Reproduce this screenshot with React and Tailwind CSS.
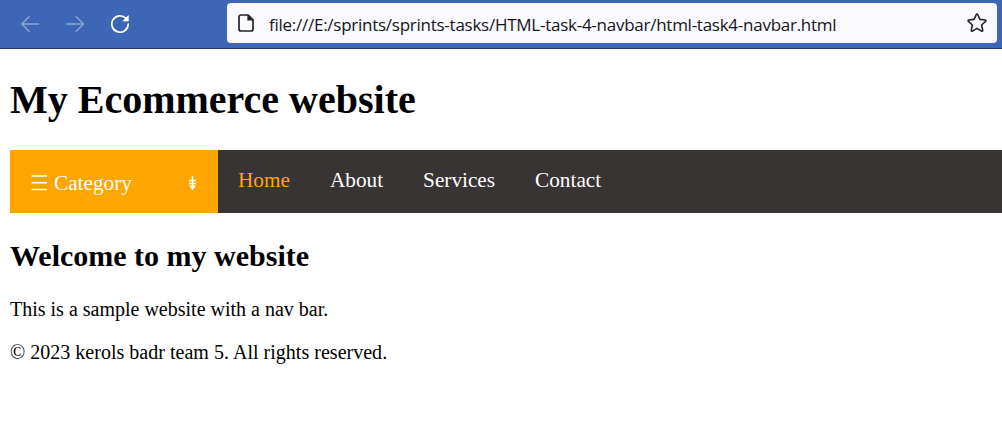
const links = ["Home", "About", "Services", "Contact"];

function BackIcon() {
  return (
    <svg className="h-5 w-5" viewBox="0 0 20 20" fill="none" stroke="#8ba3d6" strokeWidth="1.5" strokeLinecap="round" strokeLinejoin="round">
      <path d="M18.5 10H1.8M9 2.800 1.8 10 9 17.200" />
    </svg>
  );
}

function ForwardIcon() {
  return (
    <svg className="h-5 w-5" viewBox="0 0 20 20" fill="none" stroke="#8ba3d6" strokeWidth="1.5" strokeLinecap="round" strokeLinejoin="round">
      <path d="M1.8 10h16.700M11.300 2.800l7.200 7.200-7.200 7.200" />
    </svg>
  );
}

function ReloadIcon() {
  return (
    <svg className="h-5 w-5" viewBox="0 0 20 20" fill="none">
      <path d="M15.800 4.200A8.200 8.200 0 1 0 18.2 10" stroke="#fff" strokeWidth="1.700" strokeLinecap="round" />
      <path d="M18.400 1.600v5.500h-5.500z" fill="#fff" stroke="#fff" strokeWidth=".6" strokeLinejoin="round" />
    </svg>
  );
}

function PageIcon() {
  return (
    <svg className="h-[18px] w-4" viewBox="0 0 16 18" fill="none">
      <path d="M3 1h7.2L15 5.8V15a2 2 0 0 1-2 2H3a2 2 0 0 1-2-2V3a2 2 0 0 1 2-2z" stroke="#23222b" strokeWidth="1.7" strokeLinejoin="round" />
      <path d="M9.4.8v5.6H15z" fill="#23222b" />
    </svg>
  );
}

function StarIcon() {
  return (
    <svg className="h-5 w-5" viewBox="0 0 20 20" fill="none" stroke="#23222b" strokeWidth="1.6" strokeLinejoin="round">
      <path d="M9.3 1.5a.8.8 0 0 1 1.4 0l2.2 4.9 5.3.6a.8.8 0 0 1 .4 1.4l-4 3.6 1.1 5.3a.8.8 0 0 1-1.2.8L10 15.4l-4.5 2.7a.8.8 0 0 1-1.2-.8L5.400 12l-4-3.600a.8.8 0 0 1 .4-1.400l5.300-.6z" />
    </svg>
  );
}

export default function App() {
  return (
    <div className="h-[446px] w-[1002px] overflow-hidden bg-white font-['Liberation_Serif',serif] text-black">
      <header className="flex h-[49px] items-start border-b border-[#23376b] bg-[#3d66b6] pt-[3px] pl-5">
        <div className="flex h-10 items-center gap-[25px] pt-[1px]">
          <BackIcon />
          <ForwardIcon />
          <ReloadIcon />
        </div>
        <div className="ml-[97px] flex h-10 w-[770px] items-center rounded bg-[#f9f9fe] pl-[11px]">
          <PageIcon />
          <span className="ml-[15px] pt-[3px] font-['Open_Sans','Noto_Sans',sans-serif] text-[17px] leading-6 tracking-[-0.257px] whitespace-nowrap text-[#15141a]">
            file:///E:/sprints/sprints-tasks/HTML-task-4-navbar/html-task4-navbar.html
          </span>
          <span className="mr-[10px] ml-auto"><StarIcon /></span>
        </div>
      </header>
      <main className="pl-[10px]">
        <h1 className="pt-[28px] text-[40px] leading-[46px] font-bold whitespace-nowrap">My Ecommerce website</h1>
        <nav className="mt-[27px] flex h-[63px] bg-[#383433] text-[21.25px] leading-6 text-white">
          <div className="flex w-[208px] items-start bg-[#ffa500] px-5 pt-[21px]">
            <svg className="mt-[3px] h-[18px] w-[18px]" viewBox="0 0 18 18" stroke="#fff" strokeWidth="1.5">
              <path d="M1.500 2h15.500M1.500 8.800h15.500M1.500 15.500h15.500" />
            </svg>
            <span className="ml-[6px]">Category</span>
            <svg className="mt-[4px] ml-auto h-4 w-[10px]" viewBox="0 0 10 16" fill="none">
              <path d="M4.500 1v12M1 5.500h7M1 8.500h7" stroke="#fff" strokeWidth="1.500" />
              <path d="M.800 10.500h7.400l-3.700 4.700z" fill="#fff" />
            </svg>
          </div>
          <ul className="flex gap-10 pt-[18px] pl-5">
            {links.map((link) => (
              <li key={link} className={link === "Home" ? "text-[#ffa500]" : "text-white"}>{link}</li>
            ))}
          </ul>
        </nav>
        <h2 className="mt-[26px] text-[30px] leading-[34px] font-bold whitespace-nowrap">Welcome to my website</h2>
        <p className="mt-[25px] text-[20px] leading-[23px] whitespace-nowrap">This is a sample website with a nav bar.</p>
        <p className="mt-5 text-[20px] leading-[23px] tracking-[0.02px] whitespace-nowrap">© 2023 kerols badr team 5. All rights reserved.</p>
      </main>
    </div>
  );
}
